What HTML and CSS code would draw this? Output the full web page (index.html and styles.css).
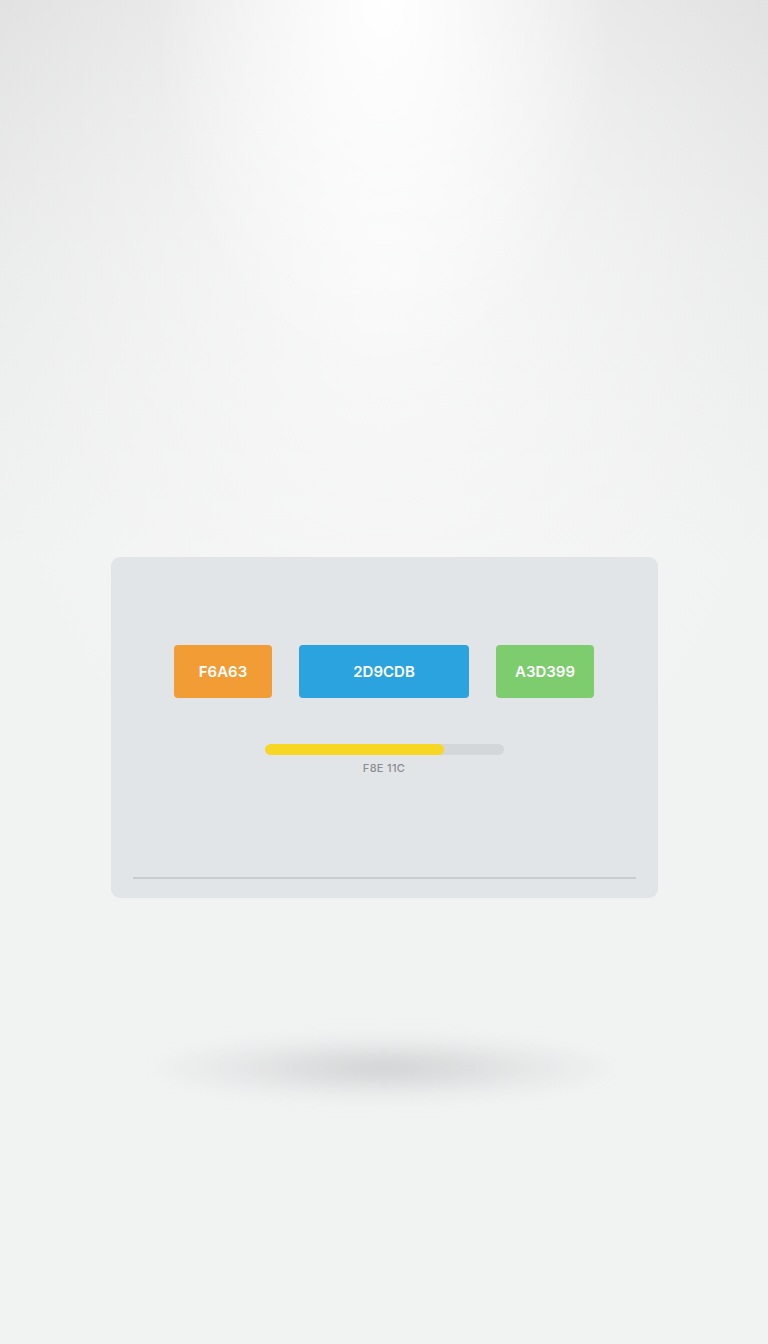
FILE: index.html
```html
<!DOCTYPE html>
<html lang="en">
<head>
  <meta charset="UTF-8" />
  <meta name="viewport" content="width=device-width, initial-scale=1.0" />
  <title>Palette</title>
  <link rel="stylesheet" href="styles.css">
</head>
<body>

  <div class="stage">
    <div class="card">
      <div class="swatches">
        <div class="swatch orange">F6A63</div>
        <div class="swatch blue">2D9CDB</div>
        <div class="swatch green">A3D399</div>
      </div>

      <div class="progress">
        <div class="track">
          <div class="fill" style="width: 75.3%"></div>
        </div>
        <div class="progress-label">F8E 11C</div>
      </div>

      <div class="divider"></div>
    </div>

    <div class="floor-shadow"></div>
  </div>

</body>
</html>
```

FILE: styles.css
```css
html, body {
  height: 100%;
}
body {
  font-family: Inter, "Liberation Sans", Arial, sans-serif;
  margin: 0;
  min-height: 1344px;
  /* spotlight from the top, darker upper corners, flat floor */
  background:
    radial-gradient(ellipse 230px 380px at 50% 0%, rgba(255,255,255,1), rgba(255,255,255,0) 100%),
    radial-gradient(ellipse 420px 620px at 50% 20%, rgba(250,250,250,0.9), rgba(250,250,250,0) 100%),
    linear-gradient(to bottom, #e2e2e2 0, #eaebeb 260px, #f1f2f2 560px, #f1f2f2 100%);
}
.stage {
  display: flex;
  flex-direction: column;
  align-items: center;
  padding-top: 557px;
}
.card {
  box-sizing: border-box;
  width: 547px;
  height: 341px;
  background: #e2e5e7;
  border-radius: 9px;
  padding: 88px 22px 0;
  display: flex;
  flex-direction: column;
  align-items: center;
}
.swatches {
  display: flex;
  gap: 27px;
}
.swatch {
  width: 98px;
  height: 53px;
  border-radius: 4px;
  display: flex;
  align-items: center;
  justify-content: center;
  color: #fff;
  font-size: 15px;
  font-weight: 600;
}
.swatch.blue {
  width: 170px;
}
.orange { background: #f29c36; }
.blue { background: #2aa3df; }
.green { background: #7dcc6e; }
.progress {
  margin-top: 46px;
  display: flex;
  flex-direction: column;
  align-items: center;
}
.track {
  width: 239px;
  height: 11px;
  border-radius: 6px;
  background: #d3d7da;
  overflow: hidden;
}
.fill {
  height: 100%;
  border-radius: 6px;
  background: #f8d624;
}
.progress-label {
  margin-top: 6px;
  font-size: 11px;
  font-weight: 500;
  color: #8a8d91;
  letter-spacing: 0.3px;
}
.divider {
  align-self: stretch;
  height: 2px;
  background: #c9cdd0;
  margin-top: 102px;
}
.floor-shadow {
  margin-top: 138px;
  width: 460px;
  height: 64px;
  border-radius: 50%;
  background: radial-gradient(ellipse at center, rgba(160,163,165,0.42) 0%, rgba(180,182,184,0.18) 45%, rgba(200,200,200,0) 75%);
  filter: blur(8px);
}
```
